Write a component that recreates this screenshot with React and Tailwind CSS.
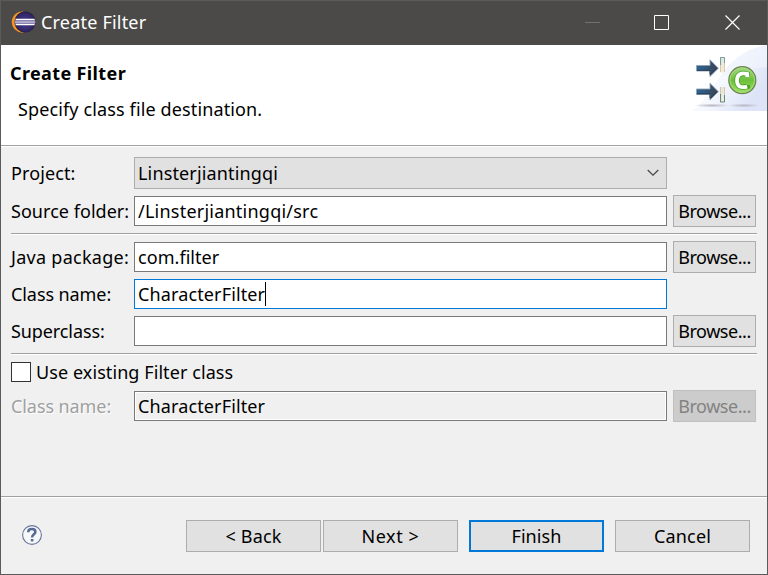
import React from "react";

function EclipseLogo() {
  return (
    <svg width="25" height="24" viewBox="0 0 25 24" className="block shrink-0">
      <defs>
        <radialGradient id="globe" cx="50%" cy="50%" r="52%">
          <stop offset="0" stopColor="#4b3c8c" />
          <stop offset="0.75" stopColor="#33286a" />
          <stop offset="1" stopColor="#231d42" />
        </radialGradient>
      </defs>
      <path d="M11.4 0.5A10.6 10.6 0 0 0 11.4 21.7L13.5 20.8V1.2Z" fill="#f7941e" />
      <circle cx="14.1" cy="11" r="10.6" fill="url(#globe)" />
      <path d="M4.2 9.4H24M4.2 12.2H24" stroke="#8a82b4" strokeWidth="1.5" />
      <path d="M4.6 8.4H23.6M3.8 11H24.4M4.6 13.6H23.6" stroke="#fff" strokeWidth="1.2" />
    </svg>
  );
}

function FilterBanner() {
  return (
    <svg width="75" height="66" viewBox="0 0 75 66" className="block">
      <defs>
        <linearGradient id="sky" x1="0.15" y1="0" x2="1" y2="0.5">
          <stop offset="0" stopColor="#ffffff" />
          <stop offset="0.5" stopColor="#f5f8fe" />
          <stop offset="1" stopColor="#dde4f7" />
        </linearGradient>
        <linearGradient id="arrow" x1="0" y1="0" x2="1" y2="0">
          <stop offset="0" stopColor="#2c6596" />
          <stop offset="1" stopColor="#3b4352" />
        </linearGradient>
        <linearGradient id="gate" x1="0" y1="0" x2="1" y2="1">
          <stop offset="0" stopColor="#cfe4e4" />
          <stop offset="1" stopColor="#fff0d8" />
        </linearGradient>
        <linearGradient id="ball" x1="0" y1="0" x2="0" y2="1">
          <stop offset="0" stopColor="#a5d98a" />
          <stop offset="0.5" stopColor="#6cc03c" />
          <stop offset="1" stopColor="#a2e368" />
        </linearGradient>
        <radialGradient id="shade">
          <stop offset="0" stopColor="#b9b7c2" />
          <stop offset="1" stopColor="#b9b7c2" stopOpacity="0" />
        </radialGradient>
      </defs>
      <path d="M0 66C10 60 20 44 28 32C40 14 54 4 75 0V66Z" fill="url(#sky)" />
      <path d="M28 32C40 14 54 4 75 0V22C56 24 42 28 28 32Z" fill="#eff3fc" opacity="0.7" />
      <ellipse cx="20" cy="60.5" rx="18" ry="2" fill="url(#shade)" />
      <ellipse cx="52" cy="60.5" rx="16" ry="2" fill="url(#shade)" />
      <g fill="url(#arrow)" stroke="#8fa0b4" strokeWidth="0.9">
        <path d="M4.5 20.5H18V14.8L26.3 23.2L18 31.5V26H4.5Z" />
        <path d="M4.5 44H18V38.3L26.3 46.7L18 55V49.5H4.5Z" />
      </g>
      <path d="M5 25.3H18V29.5L25 23.2M5 48.8H18V53L25 46.7" fill="none" stroke="#283c55" strokeWidth="1" />
      <rect x="28" y="12" width="4.4" height="15.5" fill="url(#gate)" />
      <path d="M28.5 20V12.5H32.5V18" fill="none" stroke="#7d9c9a" />
      <path d="M32.5 18V27M28.5 20V27" stroke="#dcc7a8" />
      <rect x="28" y="42" width="4.4" height="15.5" fill="url(#gate)" />
      <path d="M28.5 49V57H32.5V50" fill="none" stroke="#628681" />
      <path d="M32.5 42V50M28.5 42V49" stroke="#dcc7a8" />
      <circle cx="50.3" cy="35.2" r="13.5" fill="url(#ball)" stroke="#6f8350" strokeWidth="1.2" />
      <circle cx="50.3" cy="35.2" r="12.2" fill="none" stroke="#a5db7c" strokeWidth="1" />
      <path d="M55.2 30.6V29.3C48.5 27.2 45 29.8 45 35.4C45 41 48.5 43.4 55.2 41.4V40" fill="none" stroke="#45a01f" strokeWidth="5.4" />
      <path d="M55.2 32V28.9C48.5 27.2 45 29.5 45 35.4C45 41.2 48.5 43.3 55.2 41.6" fill="none" stroke="#fff" strokeWidth="3.8" />
    </svg>
  );
}

function Rule({ className = "" }) {
  return <div className={`h-[2px] border-t border-t-[#a0a0a0] bg-white ${className}`} />;
}

function Label({ children, className = "" }) {
  return <div className={`w-[123px] shrink-0 ${className}`}>{children}</div>;
}

function Field({ children, spacing = "", className = "border-[#7a7a7a] bg-white" }) {
  return (
    <div className={`flex h-[30px] w-[533px] shrink-0 items-center border pl-[3px] ${spacing} ${className}`}>
      {children}
    </div>
  );
}

function Browse({ disabled = false }) {
  const tone = disabled
    ? "border-[#bfbfbf] bg-[#cccccc] text-[#838383]"
    : "border-[#adadad] bg-[#e1e1e1] text-black";
  return (
    <button
      disabled={disabled}
      className={`ml-[6px] flex h-8 w-[83px] items-center justify-center border tracking-[-0.45px] ${tone}`}
    >
      Browse...
    </button>
  );
}

function Action({ children, className = "border border-[#adadad]" }) {
  return (
    <button className={`flex h-8 w-[135px] items-center justify-center bg-[#e1e1e1] ${className}`}>
      {children}
    </button>
  );
}

export default function App() {
  return (
    <div className="flex h-[575px] w-[768px] flex-col overflow-hidden border border-[#5a5a5a] bg-[#f0f0f0] font-['Noto_Sans','Noto_Sans_CJK_SC',sans-serif] text-[18px] leading-6 whitespace-nowrap text-black">
      <header className="flex h-11 shrink-0 items-center bg-[#4c4a48] pl-[10px] text-white">
        <EclipseLogo />
        <h1 className="ml-[5px] pb-[2px] tracking-[0.2px]">Create Filter</h1>
        <svg width="156" height="16" viewBox="0 0 156 16" className="mr-[26px] ml-auto block" fill="none">
          <path d="M0 7.5H15" stroke="#73716f" />
          <path d="M69.5 0.5H83.5V14.5H69.5Z" stroke="#fff" />
          <path d="M140.5 0.5L154.5 14.5M154.5 0.5L140.5 14.5" stroke="#fff" strokeWidth="1.2" />
        </svg>
      </header>

      <section className="flex h-[100px] shrink-0 justify-between bg-white pl-[9px]">
        <div className="pt-4">
          <h2 className="font-bold tracking-[0.37px]">Create Filter</h2>
          <p className="mt-3 ml-2 tracking-[0.13px]">Specify class file destination.</p>
        </div>
        <FilterBanner />
      </section>
      <Rule className="shrink-0" />

      <main className="flex-1 pt-[10px] pl-[10px]">
        <div className="flex items-center">
          <Label className="tracking-[0.1px]">Project:</Label>
          <div className="flex h-8 w-[533px] items-center justify-between border border-[#adadad] bg-[#e1e1e1] pr-[7px] pl-[3px]">
            <span className="tracking-[0.15px]">Linsterjiantingqi</span>
            <svg width="12" height="8" viewBox="0 0 12 8" fill="none">
              <path d="M0.7 1L6 6.2L11.3 1" stroke="#444" strokeWidth="1.2" />
            </svg>
          </div>
        </div>
        <div className="mt-[6px] flex items-center">
          <Label className="tracking-[0.04px]">Source folder:</Label>
          <Field spacing="tracking-[0.23px]">/Linsterjiantingqi/src</Field>
          <Browse />
        </div>
        <Rule className="mt-[6px] mr-[10px]" />
        <div className="mt-[6px] flex items-center">
          <Label className="tracking-[0.28px]">Java package:</Label>
          <Field spacing="tracking-[0.05px]">com.filter</Field>
          <Browse />
        </div>
        <div className="mt-[6px] flex items-center">
          <Label className="tracking-[-0.08px]">Class name:</Label>
          <Field spacing="tracking-[0.13px]" className="border-[#0078d7] bg-white">
            CharacterFilter
            <span className="h-6 w-px bg-black" />
          </Field>
        </div>
        <div className="mt-[6px] flex items-center">
          <Label className="tracking-[-0.1px]">Superclass:</Label>
          <Field />
          <Browse />
        </div>
        <Rule className="mt-[6px] mr-[10px]" />
        <div className="mt-[7px] flex h-5 items-center">
          <span className="size-5 border border-[#333333] bg-white" />
          <span className="ml-[5px] tracking-[0.08px]">Use existing Filter class</span>
        </div>
        <div className="mt-2 flex items-center">
          <Label className="tracking-[-0.08px] text-[#a0a0a0] [text-shadow:1px_1px_0_#fff]">Class name:</Label>
          <Field spacing="tracking-[0.13px]" className="border-[#7a7a7a] bg-[#f0f0f0] shadow-[inset_0_0_0_1px_#fff]">
            CharacterFilter
          </Field>
          <Browse disabled />
        </div>
      </main>

      <Rule className="shrink-0" />
      <footer className="flex h-[76px] shrink-0 items-start pt-[22px] pl-[21px]">
        <svg width="20" height="20" viewBox="0 0 20 20" className="mt-[5px]" fill="none">
          <circle cx="10" cy="10" r="9.4" fill="#f7f8fa" stroke="#66769b" strokeWidth="1.1" />
          <path d="M6.3 7.2V6.2C7 3.4 13.4 3.2 13.4 6.9C13.4 9.3 10.1 9.3 10.1 12.4" stroke="#566a92" strokeWidth="2.5" />
          <path d="M8.8 14H11.4V16.4H8.8Z" fill="#566a92" />
        </svg>
        <div className="ml-36 flex">
          <Action className="border border-[#adadad] tracking-[0.15px]">&lt; Back</Action>
          <Action className="ml-[2px] border border-[#adadad] tracking-[0.6px]">Next &gt;</Action>
          <Action className="ml-[11px] border-2 border-[#0078d7] tracking-[0.1px]">Finish</Action>
          <Action className="ml-[11px] border border-[#adadad] tracking-[0.2px]">Cancel</Action>
        </div>
      </footer>
    </div>
  );
}
